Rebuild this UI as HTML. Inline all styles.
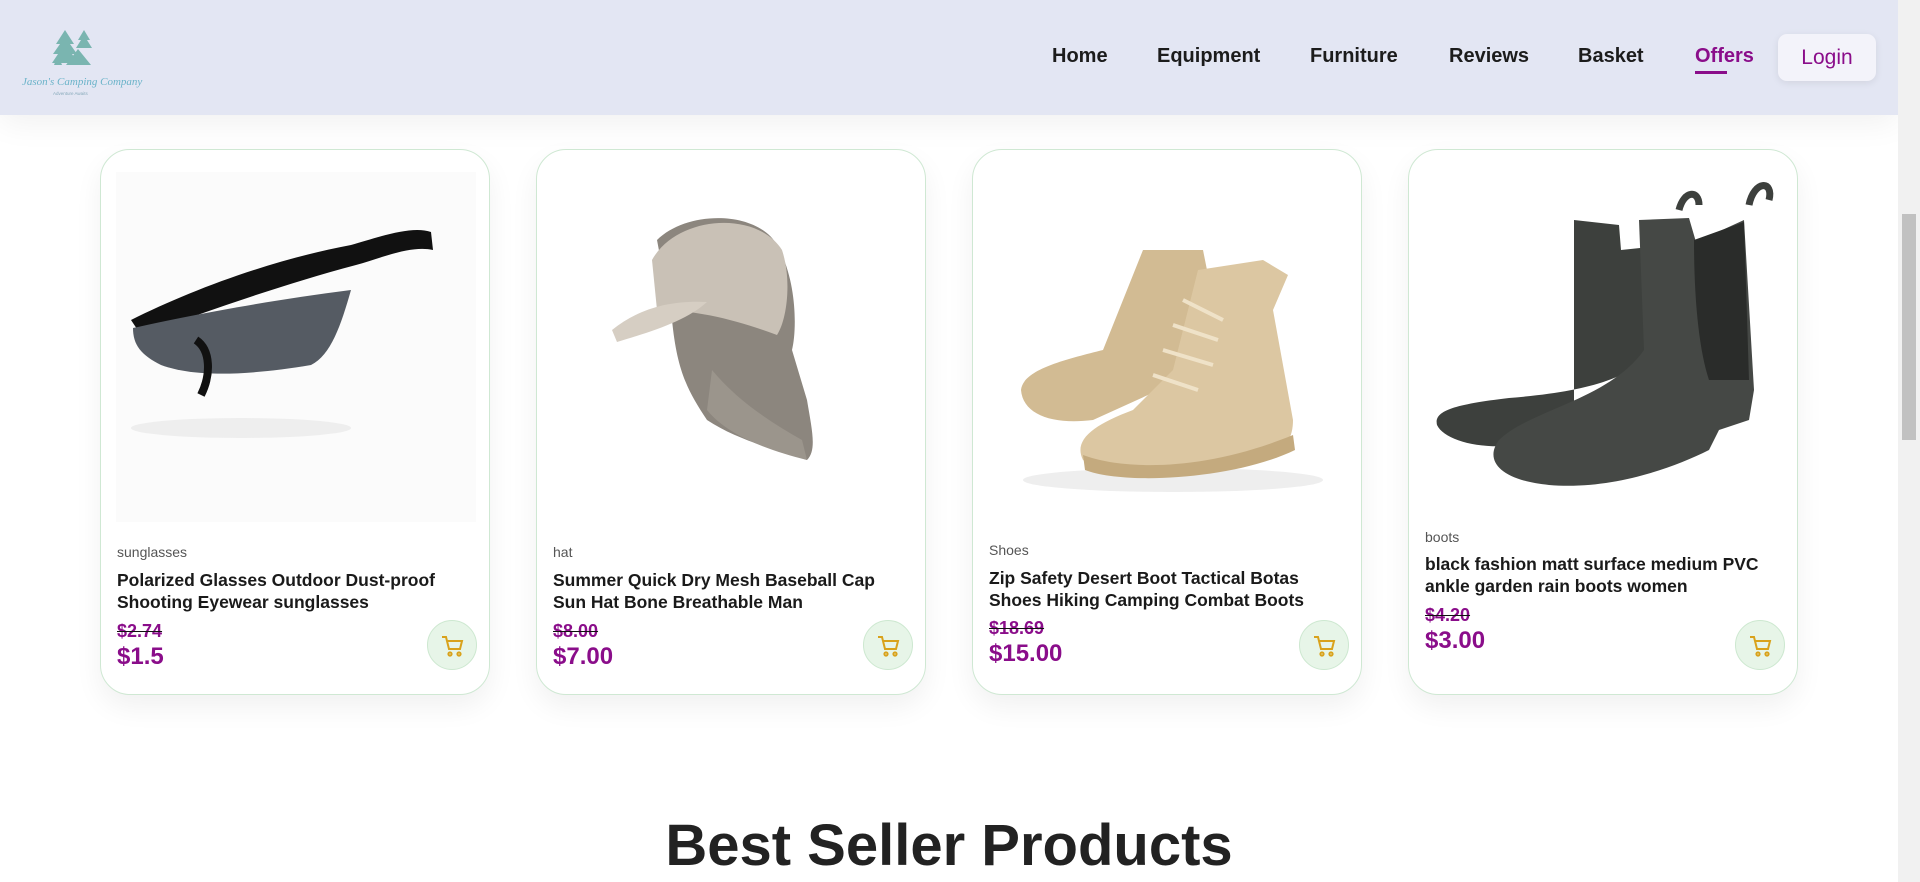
<!DOCTYPE html>
<html><head><meta charset="utf-8"><style>
*{margin:0;padding:0;box-sizing:border-box}
body{width:1920px;height:882px;overflow:hidden;background:#fff;font-family:"Liberation Sans",Arial,sans-serif;position:relative}
.hdr{position:absolute;left:0;top:0;width:1898px;height:115px;background:#e3e6f3;box-shadow:0 8px 30px rgba(0,0,0,.06)}
.nav a{position:absolute;top:45px;font-size:20px;font-weight:bold;color:#1c1c1c;text-decoration:none}
.login{position:absolute;left:1778px;top:34px;width:98px;height:47px;background:#f3f3fa;border-radius:9px;box-shadow:0 2px 8px rgba(0,0,0,.08);color:#8a0d8a;font-size:21px;text-align:center;line-height:47px}
.sb{position:absolute;left:1898px;top:0;width:22px;height:882px;background:#f1f1f1}
.thumb{position:absolute;left:1902px;top:214px;width:14px;height:226px;background:#c1c1c1}
.card{position:absolute;top:149px;width:390px;height:546px;border:1px solid #cfe8d3;border-radius:30px;background:#fff;box-shadow:0 12px 28px rgba(0,0,0,.06);overflow:hidden}
.card svg{position:absolute;left:0;top:0}
.cat{position:absolute;left:16px;font-size:14px;color:#555}
.ttl{position:absolute;left:16px;width:340px;font-size:17.5px;font-weight:bold;color:#1a1a1a;line-height:22px}
.old{position:absolute;left:16px;font-size:18px;font-weight:bold;color:#8a0d8a;text-decoration:line-through;text-decoration-color:#111}
.pr{position:absolute;left:16px;font-size:24px;font-weight:bold;color:#8a0d8a}
.cart{position:absolute;left:326px;width:50px;height:50px;border-radius:50%;background:#e7f5e8;border:1px solid #cde8d0}
.cart svg{left:13px;top:13px}
h2{position:absolute;left:0;width:1898px;top:812px;text-align:center;font-size:58px;font-weight:bold;color:#222}
</style></head><body>
<div class="hdr">
 <svg width="130" height="80" style="position:absolute;left:20px;top:22px" viewBox="0 0 130 80">
  <g fill="#7ab5b0"><path d="M45 8l-9 14h4l-7 10h5l-6 9h26l-6-9h5l-7-10h4z"/><path d="M64 8l-6 10h3l-5 8h16l-5-8h3z"/><path d="M58 27l-12 16h25z"/><path d="M38 33l-4 10h8z"/></g>
  <text x="2" y="63" font-family="Liberation Serif" font-style="italic" font-size="11" fill="#6ab3c9">Jason's Camping Company</text>
  <text x="33" y="73" font-size="4.5" fill="#8ab">Adventure Awaits</text>
 </svg>
</div>
<div class="nav">
 <a style="left:1052px">Home</a><a style="left:1157px">Equipment</a><a style="left:1310px">Furniture</a><a style="left:1449px">Reviews</a><a style="left:1578px">Basket</a><a style="left:1695px;color:#8a0d8a">Offers</a>
 <div style="position:absolute;left:1695px;top:71px;width:32px;height:3px;background:#8a0d8a"></div>
</div>
<div class="login">Login</div>

<div class="card" style="left:100px">
 <svg width="390" height="400"><rect x="15" y="22" width="360" height="350" fill="#fbfbfb"/>
  <path d="M30 170 C90 140 170 110 250 95 C275 88 310 75 330 82 L332 100 C310 95 280 108 255 115 C180 135 110 160 40 185Z" fill="#111"/>
  <path d="M32 178 C90 165 170 150 250 140 C240 175 230 205 210 215 C150 225 95 228 60 215 C40 205 32 195 32 178Z" fill="#555b63"/>
  <path d="M95 190 C110 200 110 225 100 245" stroke="#111" stroke-width="8" fill="none"/>
  <ellipse cx="140" cy="278" rx="110" ry="10" fill="#eee"/></svg>
 <div class="cat" style="top:394px">sunglasses</div>
 <div class="ttl" style="top:419px">Polarized Glasses Outdoor Dust-proof Shooting Eyewear sunglasses</div>
 <div class="old" style="top:471px">$2.74</div><div class="pr" style="top:493px">$1.5</div>
 <div class="cart" style="top:470px"><svg width="24" height="24" viewBox="0 0 24 24" fill="none" stroke="#d9a21b" stroke-width="2"><path d="M1 3h4l3 12h11l2-8H6"/><circle cx="9" cy="20" r="1.6"/><circle cx="18" cy="20" r="1.6"/></svg></div>
</div>

<div class="card" style="left:536px">
 <svg width="390" height="400">
  <path d="M120 90 C150 60 220 60 240 95 C260 130 260 180 255 200 L270 250 C275 280 280 300 270 310 C240 300 200 290 170 270 C150 240 140 220 135 170 Z" fill="#8c867e"/>
  <path d="M115 110 C140 65 220 60 245 100 C255 130 250 170 240 185 C200 170 160 160 120 160Z" fill="#c9c1b6"/>
  <path d="M75 180 C100 160 130 150 170 152 C150 170 120 180 80 192Z" fill="#d6cec3"/>
  <path d="M175 220 C200 250 230 270 265 290 L270 310 C230 300 190 285 170 260Z" fill="#9b958c"/></svg>
 <div class="cat" style="top:394px">hat</div>
 <div class="ttl" style="top:419px">Summer Quick Dry Mesh Baseball Cap Sun Hat Bone Breathable Man</div>
 <div class="old" style="top:471px">$8.00</div><div class="pr" style="top:493px">$7.00</div>
 <div class="cart" style="top:470px"><svg width="24" height="24" viewBox="0 0 24 24" fill="none" stroke="#d9a21b" stroke-width="2"><path d="M1 3h4l3 12h11l2-8H6"/><circle cx="9" cy="20" r="1.6"/><circle cx="18" cy="20" r="1.6"/></svg></div>
</div>

<div class="card" style="left:972px">
 <svg width="390" height="400">
  <ellipse cx="200" cy="330" rx="150" ry="12" fill="#eee"/>
  <path d="M170 100 L230 100 L240 150 L230 220 L120 270 C80 275 50 265 48 240 C50 220 90 210 130 200Z" fill="#d2bb93"/>
  <path d="M225 120 L290 110 L315 125 L300 160 L320 270 C320 300 300 310 250 320 C200 330 130 325 110 310 C100 290 120 275 160 260 L200 220Z" fill="#dcc7a2"/>
  <path d="M110 305 C150 320 230 322 320 285 L322 300 C260 330 150 335 112 320Z" fill="#c4aa7e"/>
  <path d="M210 150 L250 170 M200 175 L245 190 M190 200 L240 215 M180 225 L225 240" stroke="#efe2c8" stroke-width="4"/></svg>
 <div class="cat" style="top:392px">Shoes</div>
 <div class="ttl" style="top:417px">Zip Safety Desert Boot Tactical Botas Shoes Hiking Camping Combat Boots</div>
 <div class="old" style="top:468px">$18.69</div><div class="pr" style="top:490px">$15.00</div>
 <div class="cart" style="top:470px"><svg width="24" height="24" viewBox="0 0 24 24" fill="none" stroke="#d9a21b" stroke-width="2"><path d="M1 3h4l3 12h11l2-8H6"/><circle cx="9" cy="20" r="1.6"/><circle cx="18" cy="20" r="1.6"/></svg></div>
</div>

<div class="card" style="left:1408px">
 <svg width="390" height="400">
  <path d="M165 70 L210 75 L212 100 L260 95 L260 180 C240 220 200 240 100 248 C40 255 25 262 28 275 C35 290 70 300 110 295 L165 280Z" fill="#3d403d"/>
  <path d="M230 70 L280 68 L287 92 L335 70 L345 240 L340 270 L310 280 L300 300 C260 320 200 340 140 335 C90 330 75 310 90 290 C120 260 200 250 235 200Z" fill="#454845"/>
  <path d="M285 90 L335 72 L340 230 L300 230 C290 200 285 150 285 90Z" fill="#2a2c2a"/>
  <path d="M270 60 C275 40 290 40 290 55 M340 55 C345 30 365 30 360 50" stroke="#3d403d" stroke-width="7" fill="none"/></svg>
 <div class="cat" style="top:379px">boots</div>
 <div class="ttl" style="top:403px">black fashion matt surface medium PVC ankle garden rain boots women</div>
 <div class="old" style="top:455px">$4.20</div><div class="pr" style="top:477px">$3.00</div>
 <div class="cart" style="top:470px"><svg width="24" height="24" viewBox="0 0 24 24" fill="none" stroke="#d9a21b" stroke-width="2"><path d="M1 3h4l3 12h11l2-8H6"/><circle cx="9" cy="20" r="1.6"/><circle cx="18" cy="20" r="1.6"/></svg></div>
</div>

<h2>Best Seller Products</h2>
<div class="sb"></div><div class="thumb"></div>
</body></html>
